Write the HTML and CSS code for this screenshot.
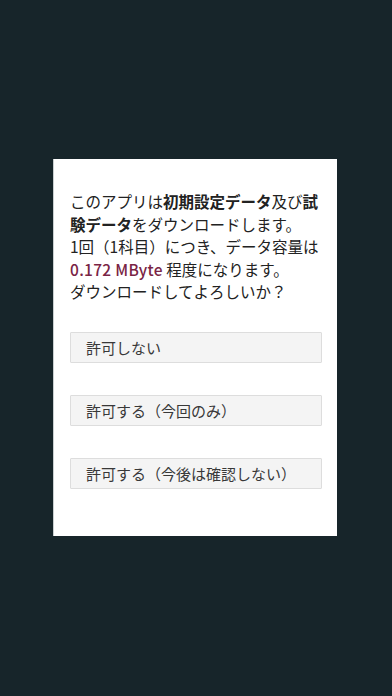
FILE: index.html
```html
<!DOCTYPE html>
<html lang="ja">
<head>
<meta charset="utf-8">
<meta name="viewport" content="width=device-width, initial-scale=1">
<link rel="stylesheet" href="styles.css">
</head>
<body>
<div class="page">
  <div class="dialog">
    <div class="message">
      <span class="line">このアプリは<b>初期設定データ</b>及び<b>試</b></span>
      <span class="line"><b>験データ</b>をダウンロードします。</span>
      <span class="line">1回（1科目）につき、データ容量は</span>
      <span class="line"><span class="size">0.172 MByte</span> 程度になります。</span>
      <span class="line">ダウンロードしてよろしいか？</span>
    </div>
    <div class="actions">
      <button class="btn">許可しない</button>
      <button class="btn">許可する（今回のみ）</button>
      <button class="btn">許可する（今後は確認しない）</button>
    </div>
  </div>
</div>
</body>
</html>
```

FILE: styles.css
```css
html, body {
  margin: 0;
  padding: 0;
  height: 100%;
}
body {
  background: #17252a;
  font-family: "Noto Sans CJK JP", "Noto Sans", sans-serif;
}
.page {
  padding: 159px 0 0 54px;
}
.dialog {
  box-sizing: border-box;
  width: 283px;
  height: 377px;
  background: #ffffff;
  padding: 31px 15px 0 16px;
  box-shadow: -1px 0 0 #c9cfd0;
}
.message {
  font-size: 15.5px;
  line-height: 22.5px;
  color: #222222;
}
.line {
  display: block;
  white-space: nowrap;
}
.message b {
  font-weight: 700;
}
.size {
  color: #7a2445;
  font-weight: 500;
  letter-spacing: 0.3px;
}
.actions {
  display: flex;
  flex-direction: column;
  gap: 32px;
  margin-top: 29px;
}
.btn {
  box-sizing: border-box;
  width: 252px;
  height: 31px;
  background: #f4f4f4;
  border: 1px solid #dddddd;
  border-radius: 1px;
  padding: 0 0 0 15px;
  text-align: left;
  font-family: "Noto Sans CJK JP", "Noto Sans", sans-serif;
  font-size: 15px;
  color: #383838;
  line-height: 29px;
}
```
